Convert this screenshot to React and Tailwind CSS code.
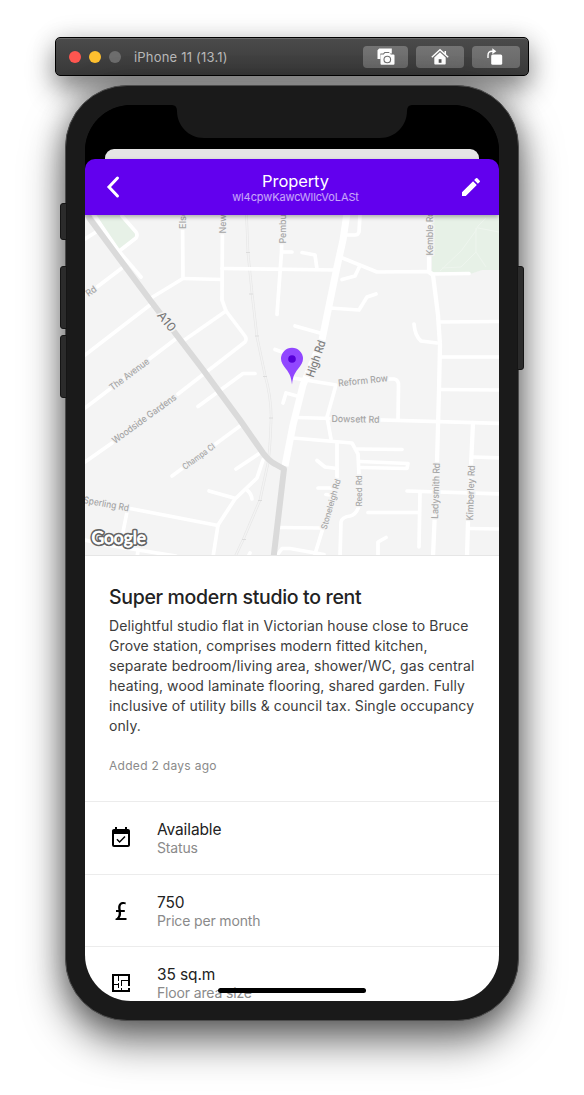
import React from "react";
import { MdEdit, MdEventAvailable } from "react-icons/md";

const thinRoads = [
  "M94 215 L118 250 L141 277",
  "M122 216 L136 232 Q138 235 136 238 L118 252",
  "M85 239 L96 232",
  "M122 268 L97 287",
  "M182.500 215 L183 278.500 L151 298",
  "M183 278.500 L222 279.500",
  "M222.500 215 L222 300 L226 311 L245 336 Q247 339 245 342 L178 394",
  "M112 443 L85 462",
  "M226 311 L183 341",
  "M175 339.500 L85 408",
  "M150 305 L85 355",
  "M198 406.500 L243 373.500 L255 373.500",
  "M172 476 L240 426",
  "M236 469 L260 453",
  "M263 460 L257 478 L235 499 L218 525 L213 557",
  "M209 491 L234 498",
  "M247 490 Q251 493 252 499",
  "M130 508.500 L218 525.500",
  "M127 512 L123 532",
  "M85 540 L107 545 L176 556",
  "M138 551 L137 557",
  "M250 553 L248 557",
  "M282 216 L281.500 252 L277 314.500",
  "M222 268.500 L335 270",
  "M282 252 L292 252",
  "M302 252.500 L315 255 L317 269",
  "M360 215 L359 232 Q358 235 355 235 L347 235",
  "M340 257 L377 272 L428 271.500 L433 274 L469 273.500",
  "M360 265.500 L355 276 L342 279.500",
  "M330 308 L359 310 L367 297 L376 294",
  "M295 326 L320 333",
  "M275 349.500 L285 353",
  "M414 324 Q415 336 421 341 L437 343",
  "M440 322 L500 321.500",
  "M440 357 L500 357",
  "M440 389.500 L500 390",
  "M297 417.500 L500 423.500",
  "M293 378 L336 385 L327 417 L331 439",
  "M385 379 L394 379 Q399 380 398.500 386 L398 420",
  "M283 403 L286 393 L299 396.500",
  "M293 438 L352 443 L358 454 L359 475 L359 506 Q356 515 350 516 Q342 517 341 522 L340 557",
  "M357 449 L402 449.500",
  "M360 461.500 L408 463.500 L407 468.500 L360 467.500",
  "M337 442 L337 478",
  "M317 460.500 L325 467 L337 468.500",
  "M318 488 L331 488",
  "M326 494.500 L331 495",
  "M323 528 L315 554",
  "M280 527.500 L320 528",
  "M278 554 L282 548.500 L290 548.500 L324 554.500",
  "M407 491 L500 494",
  "M420 493 L419 547",
  "M368 512.500 L419 512.500",
  "M378 557 L378 542 L386 537.500",
  "M473 457 L500 458",
  "M470 528.500 L500 529",
];

const wideRoads = [
  "M429 215 L429 272 L433 275 L438 315 L440 345 L439 390 L437 462 L433 557",
  "M473 423 L471 465 L468 522 L467 557",
];

const labels = [
  { t: "Elsden", x: 186, y: 229, r: -90, w: 30, s: 9.5 },
  { t: "Newlyn", x: 225.5, y: 233.5, r: -90, w: 32, s: 9.5 },
  { t: "Pembury", x: 285.5, y: 243.5, r: -90, w: 38, s: 9.5 },
  { t: "Kemble Rd", x: 432.5, y: 255.5, r: -90, w: 44, s: 9.5 },
  { t: "Rd", x: 88.5, y: 297, r: -35, w: 11, s: 9.5 },
  { t: "The Avenue", x: 112.5, y: 391, r: -37, w: 47, s: 9.5 },
  { t: "Woodside Gardens", x: 115, y: 444, r: -36, w: 77, s: 9.5 },
  { t: "Champa Cl", x: 185, y: 470, r: -36, w: 38, s: 8.5 },
  { t: "Sperling Rd", x: 83, y: 503, r: 10.5, w: 46, s: 9.5 },
  { t: "Reform Row", x: 338.5, y: 386.5, r: -6, w: 50, s: 9.5 },
  { t: "Dowsett Rd", x: 331.5, y: 422, r: 1, w: 48, s: 9.5 },
  { t: "Stoneleigh Rd", x: 326.5, y: 530, r: -74, w: 52, s: 8.5 },
  { t: "Reed Rd", x: 361.5, y: 506.5, r: -90, w: 31, s: 8.5 },
  { t: "Ladysmith Rd", x: 438, y: 519, r: -88, w: 56, s: 9.5 },
  { t: "Kimberley Rd", x: 473, y: 520.5, r: -88, w: 55, s: 9.5 },
];

function MapView() {
  return (
    <svg viewBox="85 215 414 341" className="block h-[341px] w-[414px] shrink-0 bg-[#f4f4f4]">
      <path d="M97 215 L122 215 L137 233 L136 238 L118 252 Z" fill="#e7f1e7" />
      <path d="M432 215 H499 V270 L482 270 L470 274 L432 272 Z" fill="#e7f1e7" />
      <g fill="none" stroke="#eef5ee" strokeWidth="1">
        <path d="M440 271 L461 251 L475 232 L478 226 L486 218" />
        <path d="M476 228 V252 L486 267" />
        <path d="M476 252 L461 267 L442 268 M478 228 L499 232" />
      </g>
      <g fill="none" stroke="#e6e6e6">
        <path d="M246.500 215 L248 253 L252 293 L257 337 L265 375 Q272 400 271 422 Q270 450 268 463 L260 500 L243 540 L235 557" strokeWidth="2.600" />
        <path d="M246.500 215 L248 253 L252 293 L257 337 L265 375 Q272 400 271 422 Q270 450 268 463 L260 500 L243 540 L235 557" strokeWidth="1.400" stroke="#f3f3f3" />
        <path d="M246 252.500 h4 M249 294 h4 M255 336 h4 M263 376.500 h4 M269 418 h4 M258 500.500 h4 M242 539.500 h4" strokeWidth="1" stroke="#dcdcdc" />
      </g>
      <g fill="none" stroke="#ffffff" strokeLinecap="round" strokeLinejoin="round">
        {thinRoads.map((d) => (
          <path key={d} d={d} strokeWidth="3.700" />
        ))}
        {wideRoads.map((d) => (
          <path key={d} d={d} strokeWidth="4.300" />
        ))}
        <path d="M347 213 L343 240 L337 267 L322 340 L303 385 L293 425 L285 466" strokeWidth="7" strokeLinecap="butt" />
      </g>
      <path d="M86 212 L90 219 L150 300 L204 371 L240 420 L263 453 Q269 461 275 464 L284 469 L273.500 558" fill="none" stroke="#dadada" strokeWidth="6" strokeLinejoin="round" />
      <g fontFamily="Inter, 'Liberation Sans', sans-serif" fontWeight="500" stroke="#f4f4f4" strokeWidth="3" strokeLinejoin="round" textRendering="geometricPrecision">
        {labels.map((l) => (
          <text key={l.t} transform={`translate(${l.x} ${l.y}) rotate(${l.r})`} fontSize={l.s} textLength={l.w} lengthAdjust="spacingAndGlyphs" fill="#a6a6a6" className="[paint-order:stroke]">
            {l.t}
          </text>
        ))}
        <text transform="translate(156.500 315.500) rotate(51)" fontSize="12" textLength="22" lengthAdjust="spacingAndGlyphs" fill="#757575" fontWeight="400" className="[paint-order:stroke]">A10</text>
        <text transform="translate(313.500 378) rotate(-71)" fontSize="11.500" textLength="38" lengthAdjust="spacingAndGlyphs" fill="#7d7d7d" className="[paint-order:stroke]">High Rd</text>
      </g>
      <text x="91.500" y="544" fontSize="18" textLength="54.500" lengthAdjust="spacingAndGlyphs" fontWeight="500" fontFamily="Lato, sans-serif" fill="#ffffff" stroke="#666666" strokeWidth="4" strokeLinejoin="round" textRendering="geometricPrecision" className="[paint-order:stroke]">Google</text>
      <text aria-hidden="true" x="91.500" y="544" fontSize="18" textLength="54.500" lengthAdjust="spacingAndGlyphs" fontWeight="500" fontFamily="Lato, sans-serif" fill="#ffffff" stroke="#ffffff" strokeWidth="0.500" textRendering="geometricPrecision">Google</text>
      <path d="M292 384.500 C291 376 289.500 373.500 286 369 C283 365 281 362.500 281 358.800 A11 11 0 0 1 303 358.800 C303 362.500 301 365 298 369 C294.500 373.500 293 376 292 384.500 Z" fill="#9147ff" />
      <circle cx="292" cy="359" r="3.800" fill="#5600d8" />
      <path d="M85 555.500 H499" stroke="#e6e6e6" />
    </svg>
  );
}

const Pound = () => (
  <svg viewBox="0 0 24 24" className="size-6" fill="currentColor">
    <path d="M6.500 21V19.750C7.440 19.290 8.240 18.570 8.810 17.700C9.380 16.830 9.670 15.850 9.680 14.750L9.660 13.770L9.570 13H7V11H9.400C9.250 10.170 9.160 9.310 9.130 8.250C9.160 6.610 9.640 5.330 10.580 4.410C11.500 3.500 12.770 3 14.320 3C15.320 3 16.120 3.200 16.840 3.500L16.400 5.400C15.900 5.150 15.250 5 14.400 5C12.500 5 11.500 6.200 11.500 8.300C11.500 9.400 11.650 10.200 11.800 11H15.800V13H12L12.050 14.800C12 16.400 11.600 17.800 10.600 19H17.500V21Z" />
  </svg>
);

const FloorPlan = () => (
  <svg viewBox="0 0 24 24" className="size-6" fill="currentColor">
    <path d="M10 5V10H9V5H5V13H9V12H10V17H9V14H5V19H12V17H13V19H19V17H21V21H3V3H21V15H19V10H13V15H12V9H19V5H10Z" />
  </svg>
);

function ToolButton({ className, children }) {
  return (
    <button className={`flex h-[22px] items-center justify-center rounded-[4px] bg-linear-to-b from-[#747474] to-[#686868] ${className}`}>
      {children}
    </button>
  );
}

function Toolbar() {
  return (
    <div className="flex h-[39px] w-[474px] items-center rounded-[5px] border border-black bg-linear-to-b from-[#4b4b4b] to-[#383838] pr-2 pl-[13px] shadow-[inset_0_1px_0_#6a6a6a,0_14px_28px_rgba(0,0,0,0.46),0_0_26px_rgba(0,0,0,0.12)]">
      <div className="flex gap-2">
        <span className="size-3 rounded-full bg-[#ff5650]" />
        <span className="size-3 rounded-full bg-[#ffc02f]" />
        <span className="size-3 rounded-full bg-[#6d6d6d]" />
      </div>
      <span className="ml-[13px] text-[13px] leading-4 tracking-[0.2px] whitespace-nowrap text-[#b9b9b9]">iPhone 11 (13.1)</span>
      <div className="ml-auto flex gap-2">
        <ToolButton className="w-[45px]">
          <svg viewBox="0 0 18 18" className="size-[18px]">
            <path d="M2.200 0.500h12.600v5h-1.600l-1.300-1.500H7.500L6.200 5.500H3.400V11H0.500V2.200Z" fill="#fff" />
            <path d="M4.500 6.500h2.300L8 5h4.600l1.200 1.500h2.700q1 0 1 1v8.300q0 1-1 1H4.500q-1 0-1-1V7.500q0-1 1-1Z" fill="#fff" />
            <circle cx="10.300" cy="11.500" r="3.300" fill="#fff" stroke="#707070" strokeWidth="1.100" />
          </svg>
        </ToolButton>
        <ToolButton className="w-12">
          <svg viewBox="0 0 18 18" className="size-[18px]">
            <path d="M0.800 9.300 L9 1.800 L17.200 9.300 M14.300 3v4" fill="none" stroke="#fff" strokeWidth="1.500" />
            <path d="M3.300 9.500 9 4.300l5.700 5.200V15.700q0 .8-.8.8H4.100q-.8 0-.8-.8Z" fill="#fff" />
            <path d="M7.700 11.200h2.800v3.600H7.700Z" fill="#555" />
          </svg>
        </ToolButton>
        <ToolButton className="w-12">
          <svg viewBox="0 0 18 18" className="mr-[3px] size-[18px]">
            <rect x="5.200" y="6.500" width="11" height="10.300" rx="1.500" fill="#fff" />
            <path d="M2 10 V7.500 Q2 3.300 6 3.300 H7.500" fill="none" stroke="#fff" strokeWidth="1.400" />
            <path d="M6.300 0.300 10.300 3.300 6.300 6.200Z" fill="#fff" />
          </svg>
        </ToolButton>
      </div>
    </div>
  );
}

function Row({ icon, title, subtitle, className }) {
  return (
    <div className={`flex shrink-0 items-start border-t border-[#ececec] bg-white pl-[23.5px] text-black ${className}`}>
      <span className="mt-[23.5px] size-6">{icon}</span>
      <div className="ml-[24.5px] pt-[18px]">
        <div className="text-[15.5px] leading-5 tracking-[-0.12px] text-[#222]">{title}</div>
        <div className="text-[14px] leading-[15px] tracking-[-0.15px] text-[#8a8a8a]">{subtitle}</div>
      </div>
    </div>
  );
}

const sideButton = "absolute bg-[#2b2b2b] border border-[#151515]";

export default function App() {
  return (
    <div className="flex h-[1095px] w-[584px] flex-col items-center overflow-hidden bg-white pt-[37px] font-['Inter','Liberation_Sans',sans-serif]">
      <Toolbar />
      <div className="relative mt-[9px] h-[936px] w-[454px] shrink-0 rounded-[62px] border border-[#4c4c4c] bg-[#1a1a1a] p-[19px] shadow-[0_20px_42px_rgba(0,0,0,0.58),0_0_28px_rgba(0,0,0,0.3)]">
        <span className={`${sideButton} top-[117px] -left-[6px] h-[37px] w-[7px] rounded-l-[3px]`} />
        <span className={`${sideButton} top-[180px] -left-[6px] h-[63px] w-[7px] rounded-l-[3px]`} />
        <span className={`${sideButton} top-[249px] -left-[6px] h-[63px] w-[7px] rounded-l-[3px]`} />
        <span className={`${sideButton} top-[180px] -right-[6px] h-[104px] w-[7px] rounded-r-[3px]`} />
        <div className="relative flex h-[896px] flex-col overflow-hidden rounded-[46px] bg-black">
          <div className="flex h-[64px] shrink-0 flex-col items-center bg-black">
            <svg viewBox="0 0 240 44" className="h-11 w-60 shrink-0">
              <path d="M0 0 Q5 0 5 6 C5 20 16 33 32 33 H208 C224 33 235 20 235 6 Q235 0 240 0 Z" fill="#1a1a1a" />
            </svg>
            <div className="h-5 w-[374px] rounded-t-[9px] bg-[#e5e5e5]" />
          </div>
          <header className="relative z-10 -mt-[10px] flex h-14 shrink-0 items-center justify-between rounded-t-[10px] bg-[#6200ee] px-4 text-white shadow-[0_2px_4px_rgba(0,0,0,0.3)]">
            <svg viewBox="0 0 24 24" className="size-6" fill="none" stroke="currentColor" strokeWidth="3">
              <path d="M16.500 3 L8 12 L16.500 21" strokeLinecap="round" strokeLinejoin="miter" />
            </svg>
            <div className="pl-[7px] text-center">
              <div className="text-[16.5px] leading-5 tracking-[-0.1px]">Property</div>
              <div className="text-[11px] leading-[13px] tracking-[-0.1px] text-white/65">wl4cpwKawcWllcVoLASt</div>
            </div>
            <MdEdit className="size-6" />
          </header>
          <MapView />
          <section className="h-[245px] shrink-0 bg-white px-6 pt-[29px]">
            <h1 className="text-[19.5px] leading-6 font-medium tracking-[-0.33px] whitespace-nowrap text-[#222]">Super modern studio to rent</h1>
            <p className="mt-[7px] text-[14px] leading-5 tracking-[0.095px] whitespace-nowrap text-[#3c3c3c]">
              Delightful studio flat in Victorian house close to Bruce
              <br />
              Grove station, comprises modern fitted kitchen,
              <br />
              separate bedroom/living area, shower/WC, gas central
              <br />
              heating, wood laminate flooring, shared garden. Fully
              <br />
              inclusive of utility bills &amp; council tax. Single occupancy
              <br />
              only.
            </p>
            <p className="mt-5 text-[12px] leading-5 tracking-[0.3px] text-[#8a8a8a]">Added 2 days ago</p>
          </section>
          <Row className="h-[73px]" icon={<MdEventAvailable className="size-6" />} title="Available" subtitle="Status" />
          <Row className="h-[72px]" icon={<Pound />} title="750" subtitle="Price per month" />
          <Row className="h-[73px]" icon={<FloorPlan />} title="35 sq.m" subtitle="Floor area size" />
          <div className="absolute bottom-2 left-[133px] h-[5px] w-[148px] rounded-full bg-black" />
        </div>
      </div>
    </div>
  );
}
